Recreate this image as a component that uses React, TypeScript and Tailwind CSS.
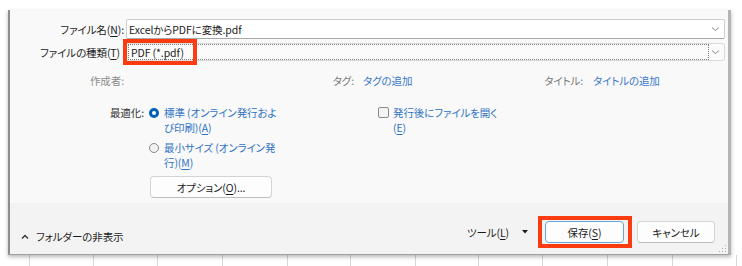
import React from "react";

const font =
  "font-['Noto_Sans_CJK_JP','Noto_Sans',sans-serif] [font-feature-settings:'palt']";

function Chevron() {
  return (
    <svg width="9" height="6" viewBox="0 0 9 6" className="shrink-0">
      <path d="M1 1.5 L4.5 4.5 L8 1.5" fill="none" stroke="#8a8a8a" strokeWidth="1" />
    </svg>
  );
}

function U({ c }: { c: string }) {
  return <span className="underline underline-offset-2">{c}</span>;
}

export default function App() {
  const cols = [30, 64, 64, 65, 65, 63, 65, 63, 64, 65, 65, 64];
  return (
    <div className={`relative w-[742px] h-[266px] bg-white overflow-hidden whitespace-nowrap ${font} text-[10.5px] tracking-[-0.1px] leading-[15px]`}>
      {/* dialog */}
      <div className="relative z-10 ml-[8px] mt-[10px] w-[723px] h-[245px] flex flex-col border-l-2 border-l-[#8e8e8e] border-r-[3px] border-r-[#b4b4b4] border-b border-b-[#a0a0a0] shadow-[0_2px_4px_rgba(0,0,0,0.28)]">
        {/* content */}
        <div className="h-[193px] bg-[#f9f9f9] pt-[9px] flex flex-col">
          {/* row 1 */}
          <div className="flex items-center h-[20px]">
            <div className="w-[114px] text-right text-[#1b1b1b]">
              ファイル名(<U c="N" />):
            </div>
            <div className="ml-[2px] w-[599px] h-[20px] bg-white border border-[#cfcfcf] border-b-[#a8a8a8] rounded-[2px] flex items-center pl-[1px] pr-[4px]">
              <span className="flex-1 text-[#1b1b1b] pl-[1px]">ExcelからPDFに変換.pdf</span>
              <Chevron />
            </div>
          </div>
          {/* row 2 */}
          <div className="flex items-center h-[18px] mt-[4px]">
            <div className="w-[111px] text-right text-[#1b1b1b] pr-[1px]">
              ファイルの種類(<U c="T" />)
            </div>
            <div className="relative ml-[5px] w-[599px] h-[18px] bg-[#fbfbfb] border border-[#dcdcdc] rounded-[2px] flex items-center pl-[1px] pr-[4px]">
              <div className="w-[581px] h-[16px] border border-dotted border-[#7a7a7a] flex items-center pl-[2px] text-[#1b1b1b]">
                PDF (*.pdf)
              </div>
              <div className="flex-1 flex justify-end">
                <Chevron />
              </div>
              <div className="absolute left-[-4px] top-[-5px] w-[74px] h-[26px] border-4 border-[#fb3c10]" />
            </div>
          </div>
          {/* row 3 */}
          <div className="flex items-center h-[14px] mt-[12px]">
            <div className="w-[114px] text-right text-[#8c8c8c]">作成者:</div>
            <div className="ml-[2px] w-[228px] text-right text-[#7a7a7a]">タグ:</div>
            <div className="ml-[9px] w-[175px] text-[#3a78c9]">タグの追加</div>
            <div className="w-[45px] text-right text-[#7a7a7a]">タイトル:</div>
            <div className="ml-[10px] text-[#3a78c9]">タイトルの追加</div>
          </div>
          {/* optimization */}
          <div className="flex mt-[18px]">
            <div className="w-[368px] flex">
              <div className="w-[134px] text-right text-[#333]">最適化:</div>
              <div className="ml-[5px] flex flex-col">
                <div className="flex">
                  <div className="mt-[3px] w-[10px] h-[10px] rounded-full bg-[#005fb8] flex items-center justify-center shrink-0">
                    <div className="w-[4px] h-[4px] rounded-full bg-white" />
                  </div>
                  <div className="ml-[5px] text-[#2f72c4]">
                    標準 (オンライン発行およ
                    <br />
                    び印刷)(<U c="A" />)
                  </div>
                </div>
                <div className="flex mt-[5px]">
                  <div className="mt-[3px] w-[10px] h-[10px] rounded-full border border-[#8a8a8a] bg-[#f2f2f2] shrink-0" />
                  <div className="ml-[5px] text-[#2f72c4]">
                    最小サイズ (オンライン発
                    <br />
                    行)(<U c="M" />)
                  </div>
                </div>
                <div className="ml-[1px] mt-[6px] w-[122px] h-[22px] bg-[#fdfdfd] border border-[#d4d4d4] border-b-[#bdbdbd] rounded-[4px] flex items-center justify-center text-[#1b1b1b]">
                  オプション(<U c="O" />)...
                </div>
              </div>
            </div>
            <div className="flex">
              <div className="mt-[2px] w-[11px] h-[11px] rounded-[2px] border border-[#8a8a8a] bg-[#f4f4f4] shrink-0" />
              <div className="ml-[4px] text-[#2f72c4]">
                発行後にファイルを開く
                <br />
                (<U c="E" />)
              </div>
            </div>
          </div>
        </div>
        {/* footer */}
        <div className="relative flex-1 bg-[#f3f3f3] flex items-start">
          <div className="flex items-center mt-[26px] ml-[11px]">
            <svg width="8" height="6" viewBox="0 0 8 6">
              <path d="M1 4.5 L4 1.5 L7 4.5" fill="none" stroke="#333" strokeWidth="1.4" />
            </svg>
            <span className="ml-[7px] text-[#1b1b1b]">フォルダーの非表示</span>
          </div>
          <div className="ml-auto mr-[13px] mt-[18px] flex items-center">
            <span className="text-[#1b1b1b]">
              ツール(<U c="L" />)
            </span>
            <svg width="6" height="4" viewBox="0 0 6 4" className="ml-[13px]">
              <path d="M0 0 L6 0 L3 3.5 Z" fill="#1b1b1b" />
            </svg>
            <div className="relative ml-[17px] w-[79px] h-[22px] bg-[#fdfdfd] border border-[#6aa5dd] rounded-[4px] flex items-center justify-center text-[#1b1b1b]">
              保存(<U c="S" />)
              <div className="absolute left-[-8px] right-[-9px] top-[-6px] bottom-[-6px] border-4 border-[#fb3c10]" />
            </div>
            <div className="ml-[13px] w-[78px] h-[22px] bg-[#fdfdfd] border border-[#d4d4d4] border-b-[#bdbdbd] rounded-[4px] flex items-center justify-center text-[#1b1b1b]">
              キャンセル
            </div>
          </div>
          <svg width="8" height="8" viewBox="0 0 8 8" className="absolute right-[1px] bottom-[1px]">
            <rect x="6" y="0" width="1" height="1" fill="#b0b0b0" />
            <rect x="3" y="3" width="1" height="1" fill="#b0b0b0" />
            <rect x="6" y="3" width="1" height="1" fill="#b0b0b0" />
            <rect x="0" y="6" width="1" height="1" fill="#b0b0b0" />
            <rect x="3" y="6" width="1" height="1" fill="#b0b0b0" />
            <rect x="6" y="6" width="1" height="1" fill="#b0b0b0" />
          </svg>
        </div>
      </div>
      {/* spreadsheet grid behind */}
      <div className="flex h-[11px]">
        {cols.map((w, i) => (
          <div key={i} style={{ width: w }} className="shrink-0 border-r border-[#d8d8d8]" />
        ))}
      </div>
    </div>
  );
}
